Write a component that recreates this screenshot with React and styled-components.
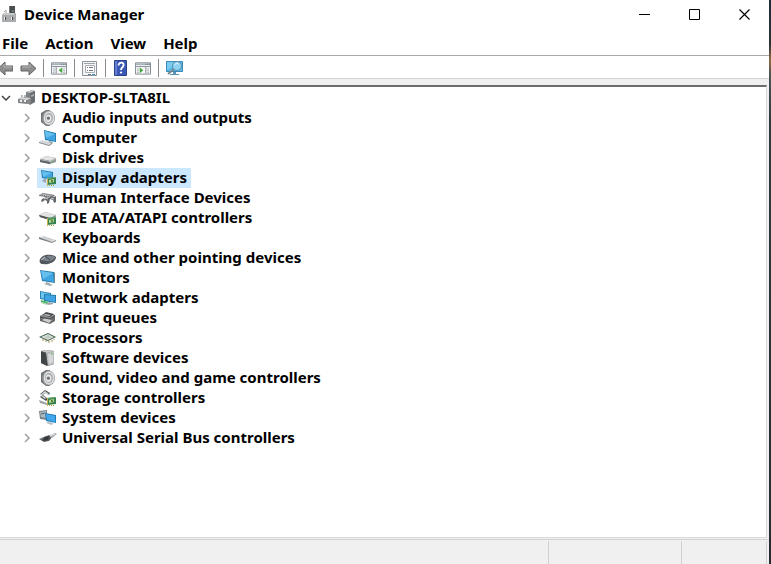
import React, { useState } from 'react'
import styled, { createGlobalStyle } from 'styled-components'

const GlobalStyle = createGlobalStyle`
* { box-sizing: border-box; }
body {
  margin: 0;
  background: #252b31;
  color: #000;
  font-family: "Noto Sans", "DejaVu Sans", sans-serif;
  font-size: 15px;
  font-weight: 700;
}
button { font: inherit; color: inherit; border: 0; padding: 0; background: none; }
`

const Desktop = styled.div`
  min-height: 100vh;
  display: flex;
  padding-right: 2px;
  background: linear-gradient(#1d2c3b 0, #2d3338 45px, #8b6d42 60px, #4b5455 75px, #303a40 120px, #252b31);
`

const Window = styled.main`
  flex: 1;
  min-width: 0;
  display: flex;
  flex-direction: column;
  background: #fff;
`

const TitleBar = styled.header`
  display: flex;
  align-items: center;
  height: 29px;
`

const Title = styled.h1`
  flex: 1;
  margin: 0 0 0 6px;
  padding-bottom: 2px;
  font-size: 15px;
  font-weight: 700;
  line-height: 20px;
`

const WindowButton = styled.button`
  width: 50px;
  height: 28px;
  display: flex;
  align-items: center;
  justify-content: center;
`

const MenuBar = styled.nav`
  display: flex;
  gap: 17px;
  height: 26px;
  padding-left: 2px;
`

const MenuButton = styled.button`
  line-height: 28px;
`

const Toolbar = styled.div`
  display: flex;
  align-items: center;
  gap: 7px;
  height: 24px;
  padding-top: 2px;
  border-top: 1px solid #a9a9a9;
  border-bottom: 1px solid #d6d6d6;
`

const ToolButton = styled.button`
  display: flex;
`

const Separator = styled.span`
  width: 1px;
  height: 18px;
  background: #8a8a8a;
`

const Content = styled.section`
  flex: 1;
  display: flex;
  padding: 6px 2px 1px 0;
  background: #f0f0f0;
`

const TreePane = styled.div`
  flex: 1;
  padding-top: 1px;
  background: #fff;
  border-top: 2px solid #6c6c6c;
  border-right: 1px solid #dadada;
  border-bottom: 1px solid #dadada;
`

const Tree = styled.ul`
  margin: 0;
  padding: 0;
  list-style: none;
`

const Branch = styled(Tree)`
  padding-left: 21px;
`

const Row = styled.div`
  display: flex;
  align-items: center;
  height: 20px;
`

const Expander = styled.button`
  width: 11px;
  margin-right: 5px;
  height: 20px;
  display: flex;
  align-items: center;
  justify-content: center;
`

const ItemButton = styled.button`
  display: flex;
  align-items: center;
  gap: 5px;
  height: 20px;
  padding: 0 4px 0 2px;
  white-space: nowrap;
  background: ${props => props.$selected ? '#cce8ff' : 'transparent'};
`

const ItemLabel = styled.span`
  padding-bottom: 2px;
  line-height: 18px;
`

const StatusBar = styled.footer`
  display: flex;
  height: 25px;
  padding: 1px 2px 0 0;
  border-top: 1px solid #d2d2d2;
  background: #f0f0f0;
`

const StatusCell = styled.div`
  flex: ${props => props.$width ? `0 0 ${props.$width}` : '1'};
  border-right: 1px solid #d2d2d2;
`

const Svg = styled.svg`
  display: block;
  flex: none;
`

const Icon = ({ children, w = 18, h = 18, box }) => (
  <Svg width={w} height={h} viewBox={box || `0 0 ${w} ${h}`} fill="none" aria-hidden="true">{children}</Svg>
)

const Speaker = () => (
  <Icon>
    <path d="M7 1 2 4v9l5 4h4V1z" fill="#6f7376" />
    <ellipse cx="9.5" cy="9" rx="6.5" ry="7.600" fill="#8d9193" />
    <ellipse cx="10" cy="9" rx="5.400" ry="6.800" fill="#dcdee0" />
    <ellipse cx="10" cy="9" rx="3.900" ry="5" fill="#a4a9ab" />
    <ellipse cx="9.600" cy="9.200" rx="2.900" ry="3.800" fill="#e4e6e7" />
    <circle cx="9.400" cy="9.200" r="1.600" fill="#6c7174" />
  </Icon>
)

const Board = () => (
  <g>
    <path d="m8 9 9-1v7l-9 1z" fill="#358151" />
    <path d="m8 9 9-1v1l-9 1z" fill="#6da96f" />
    <path d="m10 11 5-1v3l-5 1z" fill="#bbd383" />
    <path d="M12 11h2v2h-2z" fill="#528a4f" />
    <path d="M8.500 9v8" stroke="#c4b04e" />
    <path d="M10 16.500h5" stroke="#b69c43" strokeDasharray="1 1" />
  </g>
)

const icons = {
  root: (
    <Icon>
      <path d="m8 3 6-2 3 1v11l-5 3-4-3z" fill="#7d8184" />
      <path d="m8 3 6-2 3 1-5 2z" fill="#c5c7c8" />
      <path d="m12 4 5-2v11l-5 2z" fill="#686c6f" />
      <path d="m13 6 3-1v2l-3 1z" fill="#a9acae" />
      <path d="m0 10 4-2 9 1v5l-4 1-9-1z" fill="#85888b" />
      <path d="m0 10 4-2 9 1-4 2z" fill="#d5d7d8" />
      <path d="M2 11h2v2H2zm4 0h2v2H6z" fill="#eee" />
      <path d="M4 8V6m3 3V6" stroke="#747779" />
    </Icon>
  ),
  audio: <Speaker />,
  computer: (
    <Icon>
      <path d="m5 1 12 3v9L6 11z" fill="#267fae" />
      <path d="m6 2 10 3v7L7 10z" fill="#3fa5e2" />
      <path d="m6 2 10 3-9 4z" fill="#66bfed" />
      <path d="m10 12-1 2 4 1 1-2z" fill="#8998a1" />
      <path d="m0 13 3-2 10 3-3 2z" fill="#d3d7da" />
      <path d="m0 13 10 3 3-2v1l-3 2-10-3z" fill="#818588" />
    </Icon>
  ),
  disk: (
    <Icon>
      <path d="m1 10 6-3 10 2v4l-6 2-10-2z" fill="#939799" />
      <path d="m1 10 6-3 10 2-6 3z" fill="#e2e3e4" />
      <path d="m1 10 10 2v3L1 13z" fill="#5c6062" />
      <path d="m1 10 10 2 6-3v1l-6 3-10-2z" fill="#b9bcbe" />
      <path d="M13 13h2" stroke="#65b85c" />
    </Icon>
  ),
  display: (
    <Icon>
      <path d="m2 1 12 2v8L3 9z" fill="#207caf" />
      <path d="m3 2 10 2v6L4 8z" fill="#3fa5e2" />
      <path d="m3 2 10 2-9 4z" fill="#66bfed" />
      <path d="m5 10-2 2 4 2v-4z" fill="#9da7ac" />
      <Board />
    </Icon>
  ),
  hid: (
    <Icon>
      <path d="m0 6 4-2 12 2-3 3L0 7z" fill="#7d8184" />
      <path d="m1 6 3-1 10 2-2 1z" fill="#c9ccd0" />
      <path d="m3 6 9 2" stroke="#606467" strokeDasharray="1 1" />
      <path d="m3 10 4-2 3 1 2-2 3 1 2-1v6l-2 1-1-3-3-1-1 4-2 1v-3l-2-1-3 2-1-1z" fill="#63686c" />
      <path d="m5 10 2-1 2 1m3-1 3 1" stroke="#d5d7d9" />
    </Icon>
  ),
  ide: (
    <Icon>
      <path d="m0 6 6-3 11 3v3l-7 2L1 8z" fill="#939799" />
      <path d="m0 6 6-3 11 3-6 3z" fill="#e2e3e4" />
      <path d="m0 6 11 3v2L1 8z" fill="#505457" />
      <Board />
    </Icon>
  ),
  keyboard: (
    <Icon>
      <path d="m0 8 5-1 12 4-4 2z" fill="#dcdedf" />
      <path d="m0 8 13 5 4-2v1l-4 2L0 10z" fill="#7d8184" />
      <path d="m3 9 9 3M5 8l9 3" stroke="#b2b5b7" strokeDasharray="1 1" />
    </Icon>
  ),
  mouse: (
    <Icon>
      <path d="M1 10c2-4 7-5 12-4 4 1 5 2 3 5-2 3-8 5-12 4-3 0-4-2-3-5z" fill="#51575d" />
      <path d="M2 10c3-3 7-4 11-3 3 0 4 1 2 3-3 3-9 3-13 0z" fill="#79828a" />
      <path d="m6 7 5 4" stroke="#3f454b" />
      <path d="m2 11 4-3" stroke="#c2c8cd" />
    </Icon>
  ),
  monitor: (
    <Icon>
      <path d="m1 1 14 2 1 11-13-2z" fill="#287fac" />
      <path d="m2 2 12 2 1 9-11-2z" fill="#3fa5e2" />
      <path d="m2 2 12 2-10 6z" fill="#66bfed" />
      <path d="m7 13 4 1v1l3 1-3 1-6-2 2-1z" fill="#a5adb1" />
      <path d="m15 3 1 1v10l-1-1z" fill="#73858e" />
    </Icon>
  ),
  network: (
    <Icon>
      <path d="m1 2 11 2v8L1 10z" fill="#2c83ae" />
      <path d="m2 3 9 2v6L2 9z" fill="#6ec6ef" />
      <path d="m5 5 12 1v8L5 12z" fill="#237cad" />
      <path d="m6 6 10 1v6L6 11z" fill="#3fa5e2" />
      <path d="m10 13 4 1v1l-4 1-3-1z" fill="#9ca7ac" />
      <path d="m2 11 7 2-1 2-6-2z" fill="#4db566" />
      <path d="m2 13 6 2v1l-6-2z" fill="#a4cfac" />
    </Icon>
  ),
  printer: (
    <Icon>
      <path d="m1 7 5-3 10 2v6l-5 3-10-3z" fill="#66696b" />
      <path d="m1 7 5-3 10 2-5 3z" fill="#939698" />
      <path d="m4 6 3-3 8 2-4 3z" fill="#45494c" />
      <path d="m6 5 6 1-2 1-5-1z" fill="#c8cacc" />
      <path d="m3 11 3-2 7 2-3 3z" fill="#c9cbcc" />
      <path d="m1 8 10 2 5-3" stroke="#4c5052" />
    </Icon>
  ),
  processor: (
    <Icon>
      <path d="m0 8 9-4 8 4-8 4z" fill="#385c46" />
      <path d="m2 8 7-3 6 3-6 3z" fill="#dce1db" />
      <path d="m5 8 4-2 4 2-4 2z" fill="#c5ccc5" />
      <path d="M4 10v2m3-1v2m3-1v2m3-3v2m2-3v1" stroke="#a48b4d" />
    </Icon>
  ),
  software: (
    <Icon>
      <path d="m2 2 5-1 8 1v13l-6 2-7-3z" fill="#4f5355" />
      <path d="m7 4 8-2v13l-6 2z" fill="#b8bbbd" />
      <path d="m2 2 5-1 8 1-7 2z" fill="#c9cccd" />
      <path d="m2 3 5 1 1 13-6-3z" fill="#424547" />
      <path d="m9 5 5-1v9l-4 2z" fill="#d5d7d8" />
      <path d="M13 4v2" stroke="#57b657" />
    </Icon>
  ),
  sound: <Speaker />,
  storage: (
    <Icon>
      <path d="m1 5 5-4 5 3-1 2-4-2-2 2 5 4-2 2-6-4 2-2z" fill="#4e5356" />
      <path d="m2 5 4-3 4 3-1 1-3-2-3 2 4 3-1 1-4-3z" fill="#d4d6d7" />
      <path d="m0 11 8 3v2l-7-2z" fill="#9ca3a6" />
      <Board />
    </Icon>
  ),
  system: (
    <Icon>
      <path d="m0 2 8-1v10l-7-1z" fill="#77848b" />
      <path d="m1 3 6-1v7L2 8z" fill="#aab8bf" />
      <path d="m2 5 4-1" stroke="#56646d" />
      <path d="m6 4 11 2v8L7 12z" fill="#217db7" />
      <path d="m7 5 9 2v6l-8-2z" fill="#42a8ee" />
      <path d="m9 13 5 1-1 2-6-2z" fill="#b2babe" />
    </Icon>
  ),
  usb: (
    <Icon>
      <path d="m0 10 5-2 5-2 4 1-4 5-5 1z" fill="#595d60" />
      <path d="m9 7 7-3 2 1-5 4z" fill="#a9adaf" />
      <path d="m11 7 5-2" stroke="#e8e9ea" />
      <path d="m5 8 6-1-2 4-5 1z" fill="#373b3e" />
      <path d="m1 10 4-2" stroke="#a3a6a8" />
    </Icon>
  ),
}

const categories = [
  ['audio', 'Audio inputs and outputs'],
  ['computer', 'Computer'],
  ['disk', 'Disk drives'],
  ['display', 'Display adapters'],
  ['hid', 'Human Interface Devices'],
  ['ide', 'IDE ATA/ATAPI controllers'],
  ['keyboard', 'Keyboards'],
  ['mouse', 'Mice and other pointing devices'],
  ['monitor', 'Monitors'],
  ['network', 'Network adapters'],
  ['printer', 'Print queues'],
  ['processor', 'Processors'],
  ['software', 'Software devices'],
  ['sound', 'Sound, video and game controllers'],
  ['storage', 'Storage controllers'],
  ['system', 'System devices'],
  ['usb', 'Universal Serial Bus controllers'],
]

const arrowPath = 'M1 6h8V2l7 6.5L9 15v-4H1z'

const BackArrow = () => (
  <Icon w={13} h={17} box="4 0 13 17">
    <g transform="matrix(-1 0 0 1 18 0)">
      <path d={arrowPath} fill="#8e8e8e" stroke="#626262" />
      <path d="M2 7h8V4" stroke="#b8b8b8" />
    </g>
  </Icon>
)

const ForwardArrow = () => (
  <Icon w={16} h={17}>
    <path d={arrowPath} fill="#8e8e8e" stroke="#626262" />
    <path d="M2 7h8V4" stroke="#b8b8b8" />
  </Icon>
)

const PanelIcon = ({ flip }) => (
  <Icon w={16} h={16} box="0 0 17 16">
    <path d="M.5 2.5h16v12H.5z" fill="#fafafa" stroke="#7e8790" />
    <path d="M1 3h15v2H1z" fill="#aab3bc" />
    <path d="M11 4h1m1 0h1m1 0h1" stroke="#566474" />
    <path d="M1 6.5h15" stroke="#7e8790" />
    {flip ? (
      <g>
        <path d="M11.5 7v7" stroke="#7e8790" />
        <path d="M2 9h2m-2 2h2m-2 2h2m9-4h2m-2 2h2m-2 2h2" stroke="#9aa3aa" />
        <path d="m5 7.5 4 3-4 3z" fill="#45a846" />
      </g>
    ) : (
      <g>
        <path d="M5.5 7v7" stroke="#7e8790" />
        <path d="M2 9h2m-2 2h2m-2 2h2m9-4h2m-2 2h2m-2 2h2" stroke="#9aa3aa" />
        <path d="m12 7.5-4 3 4 3z" fill="#45a846" />
      </g>
    )}
  </Icon>
)

const PropertiesIcon = () => (
  <Icon w={16} h={17}>
    <path d="M.5 1.5h14v14H.5z" fill="#f4f5f6" stroke="#8b9299" />
    <path d="M2 3.5h11" stroke="#9ca5ad" />
    <path d="M3.5 5.5h9v7h-9z" fill="#fff" stroke="#a9afb5" />
    <path d="M5 7.5h1m1 0h4m-6 3h1m1 0h4" stroke="#69747d" />
    <path d="M6 14.5h3" stroke="#6e7b84" />
    <path d="M10 14.5h3" stroke="#3a95cc" />
  </Icon>
)

const HelpIcon = () => (
  <Icon w={15} h={17} box="-1 0 15 17">
    <path d="M.5.5h12v15H.5z" fill="#3c58b5" stroke="#29428d" />
    <path d="M1 1h2v14H1z" fill="#647ed0" />
    <path d="M4.5 5.5c0-4 6-3.500 5 0C9 7.500 7 7.500 7 10" stroke="#fff" strokeWidth="1.8" />
    <circle cx="7" cy="12.500" r="1.100" fill="#fff" />
  </Icon>
)

const ScanIcon = () => (
  <Icon w={18} h={17}>
    <path d="M.5 1.500h16v10H.5z" fill="#58b9e9" stroke="#398ab6" />
    <path d="M1 2h14L1 10z" fill="#7acbf0" />
    <path d="M7 12h3v2h3v1H4v-1h3z" fill="#5b94b5" />
    <path d="m8 9-6 5" stroke="#7c878d" strokeWidth="2" />
    <circle cx="11" cy="6" r="4.500" fill="#8fd2f1" stroke="#5d8fa8" />
    <path d="M8.500 5q2-3 4-1" stroke="#e5f8ff" />
  </Icon>
)

const AppIcon = () => (
  <Icon w={18} h={18}>
    <path d="M9 0h6v8H9z" fill="#4b4e50" />
    <path d="M9 0h1v8H9z" fill="#777b7d" />
    <path d="M12 5h2" stroke="#7dab7d" />
    <path d="m2 9 2-2h12v9H2z" fill="#989b9d" />
    <path d="m2 9 2-2h12l-2 2z" fill="#c8c9ca" />
    <path d="M2 9h14v7H2z" fill="#a9abad" />
    <path d="M4 11h2v3H4zm7 0h2v3h-2z" fill="#eeeeef" />
    <path d="M5 11h1v3H5zm7 0h1v3h-1z" fill="#3f4346" />
    <path d="M6 7V4M4 6l2-2" stroke="#a0a3a5" />
  </Icon>
)

const Chevron = ({ open }) => (
  <Icon w={10} h={10}>
    {open
      ? <path d="m1 3 4 4 4-4" stroke="#404040" strokeWidth="1.500" />
      : <path d="m3 1 4 4-4 4" stroke="#a0a0a0" strokeWidth="1.500" />}
  </Icon>
)

const App = () => {
  const [selected, setSelected] = useState('display')
  const [open, setOpen] = useState(true)

  return (
    <>
      <GlobalStyle />
      <Desktop>
        <Window>
          <TitleBar>
            <AppIcon />
            <Title>Device Manager</Title>
            <WindowButton aria-label="Minimize">
              <Icon w={11} h={11}><path d="M0 5.500h11" stroke="#000" /></Icon>
            </WindowButton>
            <WindowButton aria-label="Maximize">
              <Icon w={11} h={11}><path d="M.5.5h10v10H.5z" stroke="#000" /></Icon>
            </WindowButton>
            <WindowButton aria-label="Close">
              <Icon w={11} h={11}><path d="m.5.5 10 10m0-10-10 10" stroke="#000" strokeWidth="1.200" /></Icon>
            </WindowButton>
          </TitleBar>
          <MenuBar>
            <MenuButton>File</MenuButton>
            <MenuButton>Action</MenuButton>
            <MenuButton>View</MenuButton>
            <MenuButton>Help</MenuButton>
          </MenuBar>
          <Toolbar>
            <ToolButton aria-label="Back"><BackArrow /></ToolButton>
            <ToolButton aria-label="Forward"><ForwardArrow /></ToolButton>
            <Separator />
            <ToolButton aria-label="Show or hide console tree"><PanelIcon /></ToolButton>
            <Separator />
            <ToolButton aria-label="Properties"><PropertiesIcon /></ToolButton>
            <Separator />
            <ToolButton aria-label="Help"><HelpIcon /></ToolButton>
            <ToolButton aria-label="Show or hide action pane"><PanelIcon flip /></ToolButton>
            <Separator />
            <ToolButton aria-label="Scan for hardware changes"><ScanIcon /></ToolButton>
          </Toolbar>
          <Content>
            <TreePane>
              <Tree>
                <li>
                  <Row>
                    <Expander aria-label="Toggle devices" aria-expanded={open} onClick={() => setOpen(!open)}>
                      <Chevron open={open} />
                    </Expander>
                    <ItemButton $selected={selected === 'root'} onClick={() => setSelected('root')}>
                      {icons.root}
                      <ItemLabel>DESKTOP-SLTA8IL</ItemLabel>
                    </ItemButton>
                  </Row>
                  {open && (
                    <Branch>
                      {categories.map(([id, name]) => (
                        <li key={id}>
                          <Row>
                            <Expander aria-label={`Expand ${name}`}><Chevron /></Expander>
                            <ItemButton $selected={selected === id} onClick={() => setSelected(id)}>
                              {icons[id]}
                              <ItemLabel>{name}</ItemLabel>
                            </ItemButton>
                          </Row>
                        </li>
                      ))}
                    </Branch>
                  )}
                </li>
              </Tree>
            </TreePane>
          </Content>
          <StatusBar>
            <StatusCell />
            <StatusCell $width="133px" />
            <StatusCell $width="85px" />
          </StatusBar>
        </Window>
      </Desktop>
    </>
  )
}

export default App
